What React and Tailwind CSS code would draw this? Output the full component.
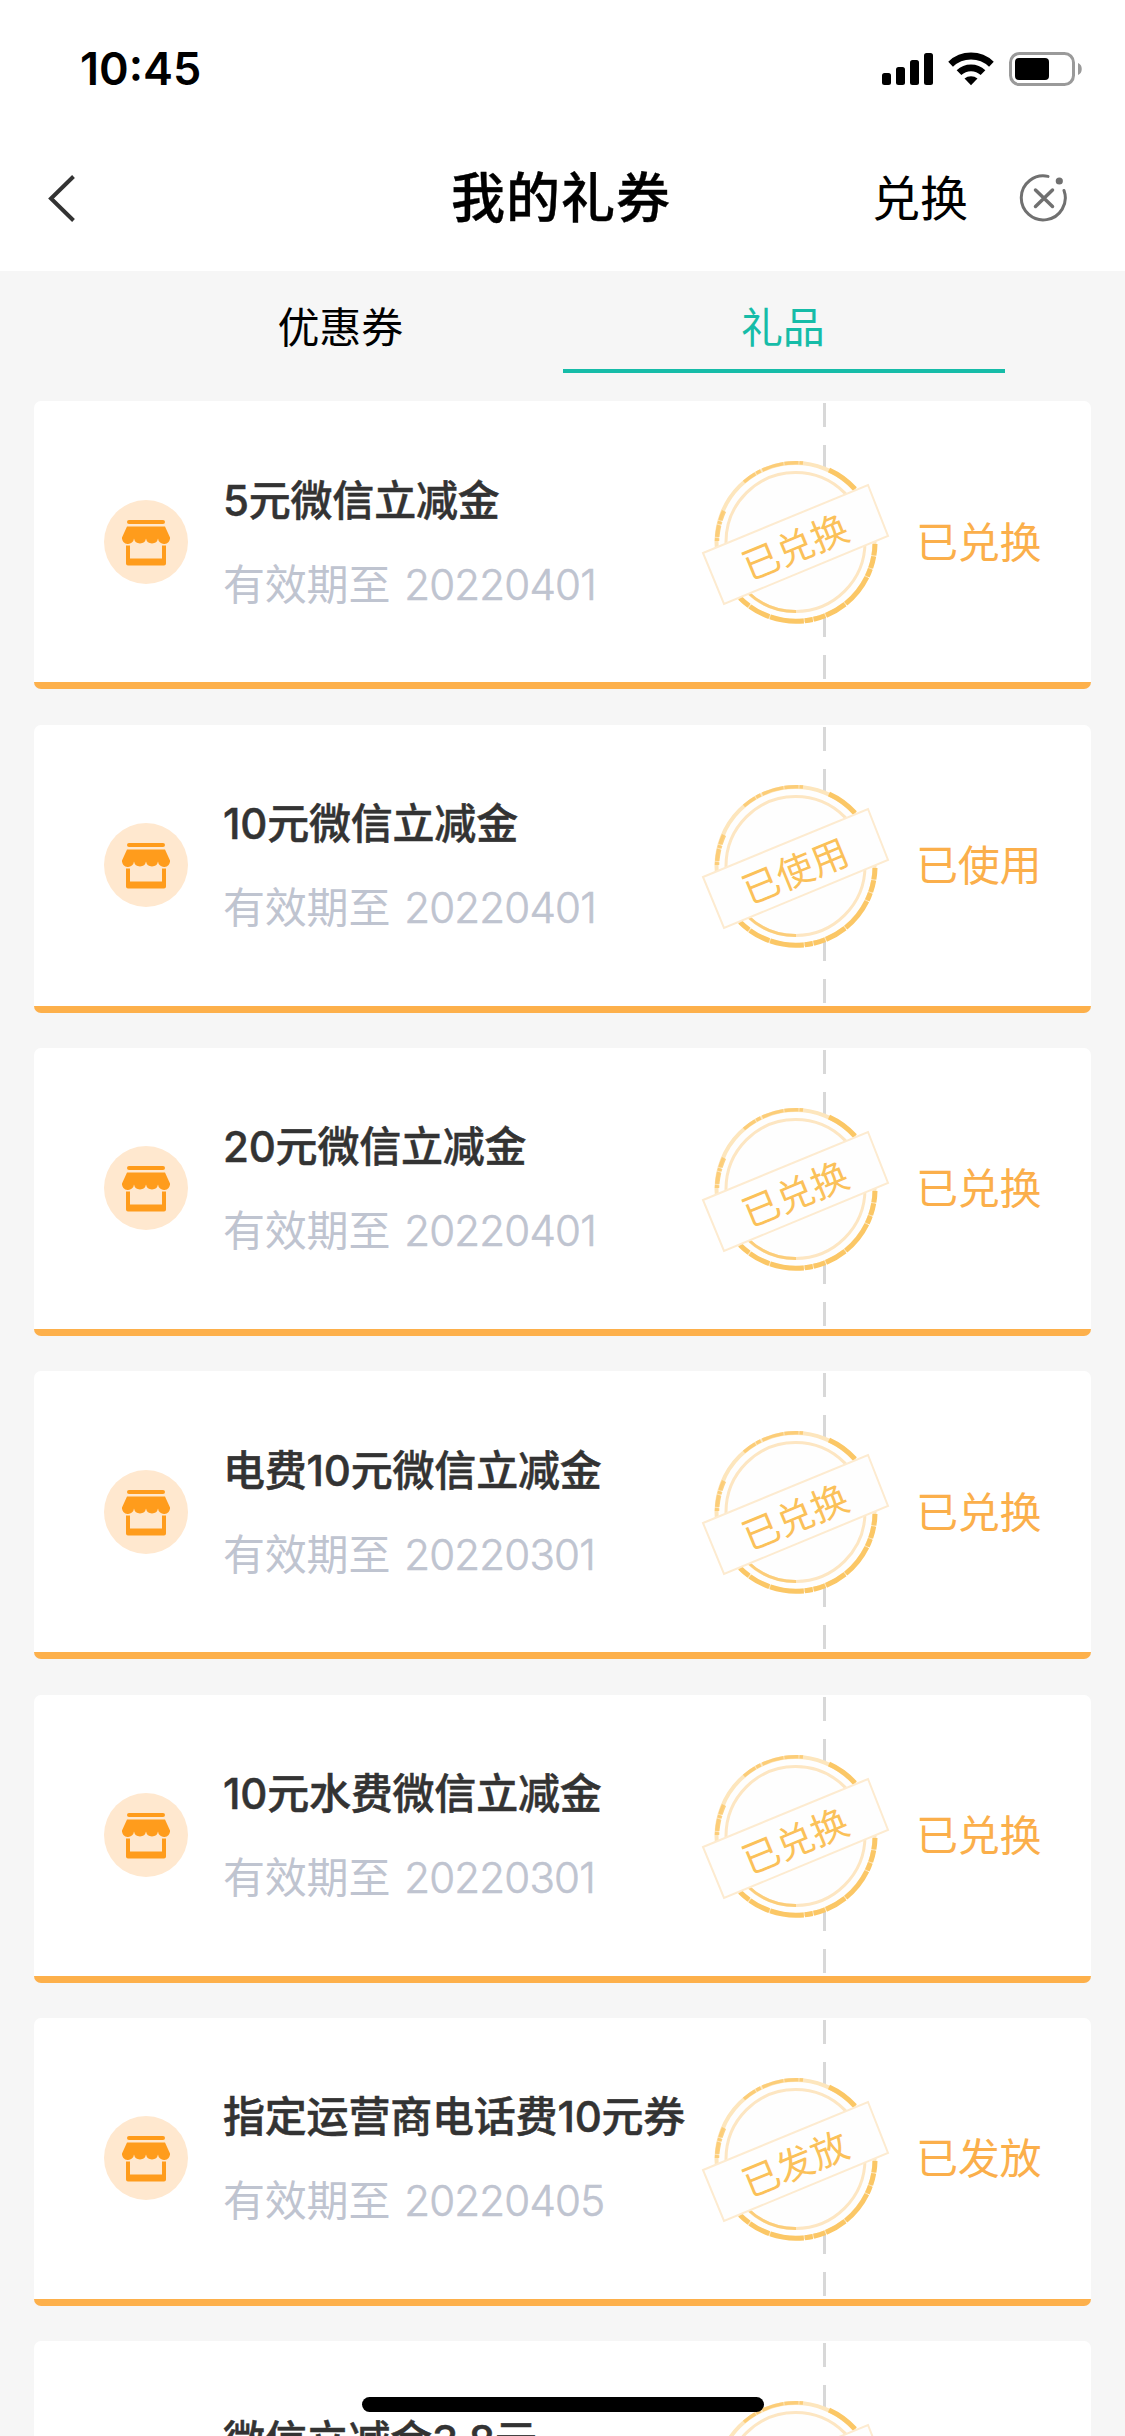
import React from "react";

const coupons = [
  { id: 1, title: "5元微信立减金", date: "20220401", status: "已兑换" },
  { id: 2, title: "10元微信立减金", date: "20220401", status: "已使用" },
  { id: 3, title: "20元微信立减金", date: "20220401", status: "已兑换" },
  { id: 4, title: "电费10元微信立减金", date: "20220301", status: "已兑换" },
  { id: 5, title: "10元水费微信立减金", date: "20220301", status: "已兑换" },
  { id: 6, title: "指定运营商电话费10元券", date: "20220405", status: "已发放" },
  { id: 7, title: "微信立减金3.8元", date: "20220405", status: "已兑换" },
];

const StatusBar = () => (
  <div className="flex h-[137px] items-start justify-between pl-[80px] pr-[43px] pt-[41px]">
    <span className="text-[45px] font-semibold leading-[56px] text-black">10:45</span>
    <svg className="mt-[9px]" width="202" height="38" viewBox="880 50 202 38">
      <rect x="882" y="73" width="9" height="12" rx="2.5" />
      <rect x="896" y="67" width="9" height="18" rx="2.5" />
      <rect x="910" y="60" width="9" height="25" rx="2.5" />
      <rect x="924" y="53" width="9" height="32" rx="2.5" />
      <g fill="none" stroke="#000" strokeWidth="6.8">
        <path d="M950.6 64.2a29.5 29.5 0 0 1 40.8 0" />
        <path d="M959 72.6a17.5 17.5 0 0 1 24 0" />
      </g>
      <path d="M964.5 78.6a10 10 0 0 1 13 0L971 85.2z" />
      <rect x="1010.5" y="53.5" width="63" height="31" rx="9" fill="none" stroke="#9a9a9a" strokeWidth="3" />
      <rect x="1015" y="58" width="34" height="22" rx="4" />
      <path d="M1078 63c5 1.5 5 10.5 0 12z" fill="#9a9a9a" />
    </svg>
  </div>
);

const Header = () => (
  <div className="grid h-[134px] grid-cols-[1fr_auto_1fr] items-center pb-[13px]">
    <svg className="ml-[46px]" width="32" height="50" viewBox="46 173 32 50" fill="none" stroke="#333" strokeWidth="4">
      <path d="M73.5 176.5L51 198.5l22.5 22" />
    </svg>
    <h1 className="-ml-[3px] pt-[3px] text-[54px] font-medium leading-[60px] tracking-[1px] text-black [-webkit-text-stroke:0.4px]">
      我的礼券
    </h1>
    <div className="flex items-center justify-end pr-[56px]">
      <span className="mr-[51px] pt-[2px] text-[48px] leading-[60px] text-black">兑换</span>
      <svg width="50" height="50" viewBox="1019 173 50 50" fill="none" stroke="#707070" strokeWidth="3" strokeLinecap="round">
        <path d="M1048 176.4A22 22 0 1 0 1064 190.5" />
        <path d="M1035.5 190l17 16.5M1052.5 190l-17 16.5" strokeWidth="3.5" />
        <circle cx="1059.3" cy="181" r="3.6" fill="#707070" stroke="none" />
      </svg>
    </div>
  </div>
);

const Tabs = () => (
  <div className="mx-[120px] flex h-[102px] text-[42px] leading-[60px] tracking-[-0.2px]">
    <div className="flex-1 pr-[2px] pt-[27px] text-center text-black">优惠券</div>
    <div className="h-full flex-1 border-b-4 border-[#16bca8] pr-[2px] pt-[27px] text-center text-[#16bca8]">礼品</div>
  </div>
);

const StoreIcon = () => (
  <div className="flex size-[84px] shrink-0 items-center justify-center rounded-full bg-[#ffe8cf]">
    <svg width="48" height="48" viewBox="0 0 48 48" fill="#ff9c1c">
      <rect x="5" y="2" width="38" height="4" rx="2" />
      <path d="M5 8.5h38l5 11a6 6 0 0 1-12 1a6.1 6 0 0 1-12 0a6.1 6 0 0 1-12 0a6 6 0 0 1-12-1z" />
      <path d="M4 27.5h4v13h32v-13h4v18q0 2-2 2H6q-2 0-2-2z" />
    </svg>
  </div>
);

// Ink stamp lying over the perforation line
const Stamp = ({ text }) => (
  <div className="absolute left-[666px] top-[50px] h-[180px] w-[192px]">
    <svg width="192" height="180" viewBox="700 451 192 180" fill="none">
      <circle cx="795.5" cy="542" r="79" fill="#fefefe" stroke="#fde6bd" strokeWidth="4" />
      <circle cx="795.5" cy="542" r="69.5" stroke="#fde6c2" strokeWidth="3" />
      <g stroke="#fbc766">
        <path d="M744 482a79 79 0 0 1 59-19" strokeWidth="3.5" strokeDasharray="14 1 5 2 22 1" opacity="0.8" />
        <path d="M829 470a79 79 0 0 1 26 19" strokeWidth="5" />
        <path d="M717 541a79 79 0 0 1 7-30" strokeWidth="4.5" strokeDasharray="3 1 12 1" opacity="0.8" />
        <path d="M740 598a79 79 0 0 0 135-54" strokeWidth="5" strokeDasharray="12 1 22 1 34 1 8 1" />
        <path d="M748 592.5a69.5 69.5 0 0 0 48 19" strokeWidth="3" opacity="0.8" />
      </g>
      <path d="M703 553l165-68 20 51-164 68z" fill="#fefefe" stroke="#fdebd0" strokeWidth="2" />
    </svg>
    <span className="absolute inset-0 flex -rotate-[22.4deg] items-center justify-center pr-[6px] pt-[11px] text-[37px] text-[#fbc159]">
      {text}
    </span>
  </div>
);

const CouponCard = ({ title, date, status }) => (
  <div className="relative flex h-[288px] shrink-0 items-center overflow-hidden rounded-[7px] border-b-[7px] border-[#fdb04b] bg-white pl-[70px]">
    <StoreIcon />
    <div className="ml-[35px] flex-1 whitespace-nowrap pt-[2px]">
      <div className="text-[42px] font-medium leading-[60px] tracking-[-0.2px] text-[#333] [-webkit-text-stroke:0.5px]">
        {title}
      </div>
      <div className="mt-[24px] flex gap-[14px] text-[42px] leading-[60px] text-[#bfc4d0]">
        <span className="tracking-[-0.2px]">有效期至</span>
        <span className="font-light tracking-[-0.8px] [-webkit-text-stroke:0.6px]">{date}</span>
      </div>
    </div>
    <svg className="absolute left-[789px] top-0" width="3" height="281">
      <path d="M1.5 2v278" stroke="#d8d8d8" strokeWidth="3" strokeDasharray="24 18" />
    </svg>
    <Stamp text={status} />
    <div className="w-[175px] pt-[2px] text-[42px] leading-[60px] tracking-[-0.2px] text-[#fbaf4b]">{status}</div>
  </div>
);

const App = () => {
  return (
    <div className="relative h-[2436px] w-[1125px] overflow-hidden bg-[#f6f6f6] font-['Inter','Noto_Sans_CJK_SC',sans-serif]">
      <div className="bg-white">
        <StatusBar />
        <Header />
      </div>
      <Tabs />
      <div className="mt-[28.3px] flex flex-col gap-[35.33px] px-[34px]">
        {coupons.map((coupon) => (
          <CouponCard key={coupon.id} {...coupon} />
        ))}
      </div>
      {/* Home indicator */}
      <div className="absolute left-[362px] top-[2397px] h-[15px] w-[402px] rounded-full bg-black" />
    </div>
  );
};

export default App;
